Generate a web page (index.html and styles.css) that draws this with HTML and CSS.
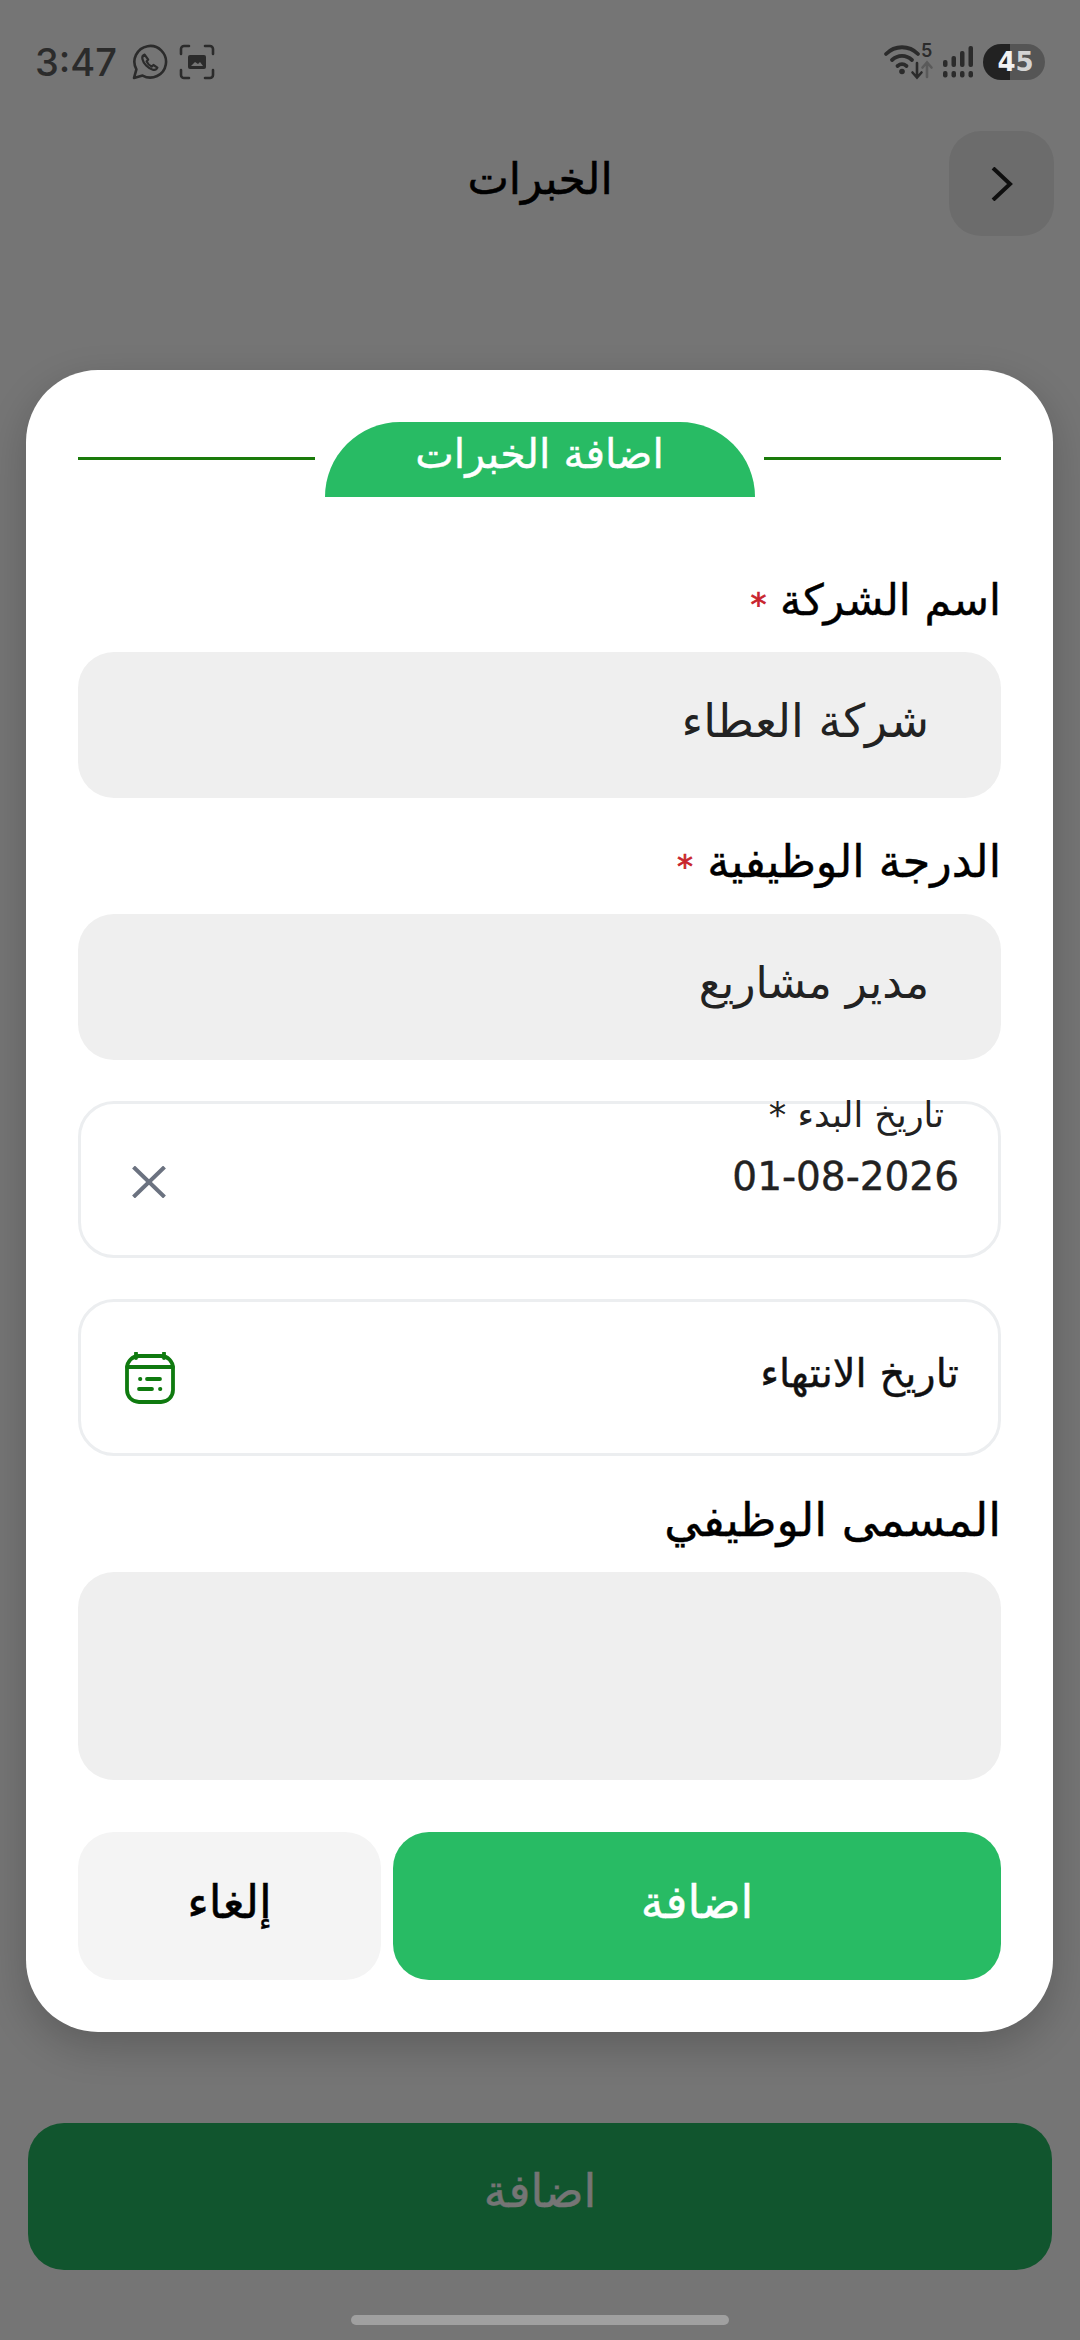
FILE: index.html
```html
<!DOCTYPE html>
<html lang="ar" dir="rtl">
<head>
  <meta charset="UTF-8" />
  <title>الخبرات</title>
  <meta name="viewport" content="width=device-width, initial-scale=1.0" />
  <link rel="stylesheet" href="styles.css">
</head>
<body>
  <div class="screen">
    <div class="status-bar" dir="ltr">
      <div class="status-left">
        <span class="clock">3:47</span>
        <svg class="status-icon" viewBox="0 0 36 36" fill="none" stroke="#2b2b2b" stroke-width="2.6">
          <path d="M2 34l2.4-8.6A15.8 15.8 0 1 1 10.6 31.6z" stroke-linejoin="round"/>
          <path d="M12.6 10.6c-1.6.6-2.6 2.4-2.2 4.4 1 4.6 5.6 9.4 10.4 10.8 2 .5 3.8-.4 4.6-2.2l-4-2.6-1.8 1.6c-2.2-1-4-3-5-5.2l1.6-1.8z" stroke-width="2.2" stroke-linejoin="round"/>
        </svg>
        <svg class="status-icon" viewBox="0 0 36 36" fill="none" stroke="#2b2b2b" stroke-width="2.6" stroke-linecap="round">
          <path d="M2 10V5a3 3 0 0 1 3-3h5M26 2h5a3 3 0 0 1 3 3v5M34 26v5a3 3 0 0 1-3 3h-5M10 34H5a3 3 0 0 1-3-3v-5"/>
          <rect x="9" y="11" width="18" height="14" rx="2" fill="#2b2b2b" stroke="none"/>
          <path d="M12 22l4-4 3 2 2-2 3 4z" fill="#757575" stroke="none"/>
        </svg>
      </div>
      <div class="status-right">
        <svg class="wifi-icon" viewBox="0 0 50 36" fill="none" stroke="#2b2b2b" stroke-width="3.8" stroke-linecap="round">
          <path d="M1 10C10 1 24 1 33 10M7 16c6-5.500 14-5.500 20 0M12.500 22c3-2.500 6-2.500 9 0"/>
          <circle cx="17" cy="27.500" r="2.800" fill="#2b2b2b" stroke="none"/>
          <path d="M32 19v14M27.500 28.500l4.500 5 4.500-5" stroke-width="2.600"/>
          <path d="M42 33V19M37.500 23.500l4.500-5 4.500 5" stroke="#5a5a5a" stroke-width="2.600"/>
          <text x="36" y="13" class="wifi-five">5</text>
        </svg>
        <svg class="signal-icon" viewBox="0 0 30 32" fill="#2b2b2b">
          <rect x="0" y="14" width="4.500" height="7" rx="2"/>
          <rect x="8.500" y="10" width="4.500" height="11" rx="2"/>
          <rect x="17" y="5" width="4.500" height="16" rx="2"/>
          <rect x="25.500" y="0" width="4.500" height="21" rx="2"/>
          <rect x="0" y="25" width="4.500" height="6.500" rx="2"/>
          <rect x="8.500" y="25" width="4.500" height="6.500" rx="2"/>
          <rect x="17" y="25" width="4.500" height="6.500" rx="2"/>
          <rect x="25.500" y="25" width="4.500" height="6.500" rx="2"/>
        </svg>
        <div class="battery"><span>4</span><span class="battery-dim">5</span></div>
      </div>
    </div>

    <header class="top-bar">
      <h1>الخبرات</h1>
      <button class="back-btn">
        <svg viewBox="0 0 22 34" fill="none" stroke="#222" stroke-width="4"><path d="M2 1l17 16L2 33"/></svg>
      </button>
    </header>

    <div class="spacer"></div>
    <button class="page-add">اضافة</button>
    <div class="scrim"></div>
    <div class="home-bar"></div>

    <div class="modal">
      <div class="modal-title">
        <span class="title-line"></span>
        <div class="title-tab">اضافة الخبرات</div>
        <span class="title-line"></span>
      </div>

      <label class="field-label first">اسم الشركة <i>*</i></label>
      <div class="field">شركة العطاء</div>

      <label class="field-label mid">الدرجة الوظيفية <i>*</i></label>
      <div class="field tight">مدير مشاريع</div>

      <div class="date-box filled">
        <div class="date-text">
          <span class="date-caption">تاريخ البدء *</span>
          <span class="date-value" dir="ltr">01-08-2026</span>
        </div>
        <svg class="clear-icon" viewBox="0 0 34 32" fill="none" stroke="#6b7280" stroke-width="4"><path d="M1.500 1l31 30M32.500 1l-31 30"/></svg>
      </div>

      <div class="date-box">
        <div class="date-text"><span class="date-placeholder">تاريخ الانتهاء</span></div>
        <svg class="calendar-icon" viewBox="0 0 50 52" fill="none" stroke="#0f7a0f" stroke-width="3.800" stroke-linecap="round">
          <rect x="2" y="4" width="46" height="46" rx="12"/>
          <path d="M2 15h46M11 1v5M39 1v5"/>
          <path d="M22 27h13M14 37h13M15 27h.4M35 37h.4"/>
        </svg>
      </div>

      <label class="field-label wide">المسمى الوظيفي</label>
      <div class="field area"></div>

      <div class="actions">
        <button class="btn btn-add">اضافة</button>
        <button class="btn btn-cancel">إلغاء</button>
      </div>
    </div>
  </div>
</body>
</html>
```

FILE: styles.css
```css
* {
  box-sizing: border-box;
  margin: 0;
  padding: 0;
  font-family: "DejaVu Sans", "Noto Sans", sans-serif;
}

body {
  width: 1080px;
  height: 2340px;
  overflow: hidden;
  background: #fff;
}

button {
  border: none;
}

.screen {
  position: relative;
  width: 1080px;
  height: 2340px;
  display: flex;
  flex-direction: column;
}

/* status bar */
.status-bar {
  position: relative;
  z-index: 1;
  height: 122px;
  padding: 43px 35px 0 35px;
  display: flex;
  justify-content: space-between;
  align-items: flex-start;
}

.status-left,
.status-right {
  display: flex;
  align-items: center;
  height: 37px;
}

.clock {
  font-family: Inter, sans-serif;
  font-size: 38px;
  font-weight: 500;
  color: #2b2b2b;
  width: 97px;
}

.status-icon {
  width: 36px;
  height: 36px;
  margin-right: 11px;
}

.wifi-icon {
  width: 50px;
  height: 36px;
  margin-right: 8px;
  overflow: visible;
}

.wifi-five {
  font-family: Inter, sans-serif;
  font-size: 18px;
  font-weight: 600;
  fill: #2b2b2b;
  stroke: none;
}

.signal-icon {
  width: 30px;
  height: 32px;
  margin-right: 10px;
}

.battery {
  width: 62px;
  height: 36px;
  padding-left: 3px;
  border-radius: 18px;
  background: linear-gradient(to right, #222 27px, #555 27px);
  display: flex;
  align-items: center;
  justify-content: center;
  font-family: Inter, sans-serif;
  font-size: 26px;
  font-weight: 700;
  color: #f2f2f2;
}

.battery-dim {
  color: #d4d4d4;
}

/* page behind the dialog */
.top-bar {
  position: relative;
  height: 105px;
  margin-top: 9px;
  display: flex;
  align-items: center;
  justify-content: center;
}

.top-bar h1 {
  font-size: 44px;
  font-weight: 500;
  color: #000;
  padding-bottom: 10px;
  -webkit-text-stroke: 0.5px #000;
}

.back-btn {
  position: absolute;
  right: 26px;
  top: 0;
  width: 105px;
  height: 105px;
  border-radius: 32px;
  background: #ececec;
  display: flex;
  align-items: center;
  justify-content: center;
}

.back-btn svg {
  width: 22px;
  height: 34px;
}

.spacer {
  flex: 1;
}

.page-add {
  height: 147px;
  margin: 0 28px 70px;
  padding-bottom: 12px;
  border-radius: 36px;
  background: #27b964;
  color: #fff;
  font-size: 46px;
  -webkit-text-stroke: 0.4px #fff;
}

.scrim {
  position: absolute;
  inset: 0;
  background: rgba(0, 0, 0, 0.54);
}

.home-bar {
  position: absolute;
  left: 351px;
  bottom: 15px;
  width: 378px;
  height: 10px;
  border-radius: 5px;
  background: #a0a0a0;
}

/* dialog */
.modal {
  position: absolute;
  left: 26px;
  top: 370px;
  width: 1027px;
  height: 1662px;
  padding: 52px 52px 0;
  background: #fff;
  border-radius: 72px;
  box-shadow: 0 14px 40px rgba(0, 0, 0, 0.2);
}

.modal-title {
  display: flex;
  align-items: flex-start;
  justify-content: space-between;
  height: 75px;
}

.title-line {
  width: 237px;
  height: 3px;
  margin-top: 35px;
  background: #1a7a0a;
}

.title-tab {
  width: 430px;
  height: 75px;
  border-radius: 75px 75px 0 0;
  background: #28bb64;
  color: #fff;
  font-size: 41px;
  line-height: 65px;
  text-align: center;
  -webkit-text-stroke: 0.4px #fff;
}

.field-label {
  display: block;
  height: 52px;
  margin-top: 38px;
  margin-bottom: 26px;
  font-size: 43px;
  line-height: 52px;
  color: #000;
  -webkit-text-stroke: 0.4px #000;
}

.field-label.first {
  margin-top: 77px;
}

.field-label.mid {
  font-size: 44.500px;
}

.field-label.wide {
  font-size: 46px;
}

.field-label i {
  font-style: normal;
  font-size: 32px;
  color: #c8232c;
  -webkit-text-stroke: 0.7px #c8232c;
}

.field {
  height: 146px;
  padding: 0 72px;
  border-radius: 36px;
  background: #efefef;
  font-size: 46px;
  line-height: 138px;
  color: #222;
}

.field.tight {
  font-size: 44px;
}

.field.area {
  height: 208px;
}

.date-box {
  height: 157px;
  margin-top: 41px;
  padding: 0 39px 0 44px;
  border: 3px solid #eceef0;
  border-radius: 36px;
  display: flex;
  align-items: center;
  justify-content: space-between;
}

.date-text {
  display: flex;
  flex-direction: column;
  justify-content: center;
}

.filled .date-text {
  padding-bottom: 14px;
}

.date-caption {
  margin-right: 15px;
  margin-top: -44px;
  height: 52px;
  font-size: 35px;
  line-height: 24px;
  color: #222;
}

.date-value {
  font-size: 39px;
  line-height: 44px;
  color: #222;
  text-align: right;
  -webkit-text-stroke: 0.4px #222;
}

.date-placeholder {
  font-size: 40px;
  color: #111;
  padding-bottom: 10px;
  -webkit-text-stroke: 0.4px #111;
}

.clear-icon {
  width: 34px;
  height: 32px;
  margin-left: 7px;
  margin-top: 4px;
}

.calendar-icon {
  width: 50px;
  height: 52px;
}

.actions {
  display: flex;
  gap: 12px;
  margin-top: 52px;
}

.btn {
  height: 148px;
  padding-bottom: 8px;
  border-radius: 36px;
  font-size: 46px;
}

.btn-add {
  flex: 1;
  background: #28bb64;
  color: #fff;
  -webkit-text-stroke: 0.4px #fff;
}

.btn-cancel {
  width: 303px;
  background: #f4f4f4;
  color: #000;
  -webkit-text-stroke: 0.5px #000;
}
```
